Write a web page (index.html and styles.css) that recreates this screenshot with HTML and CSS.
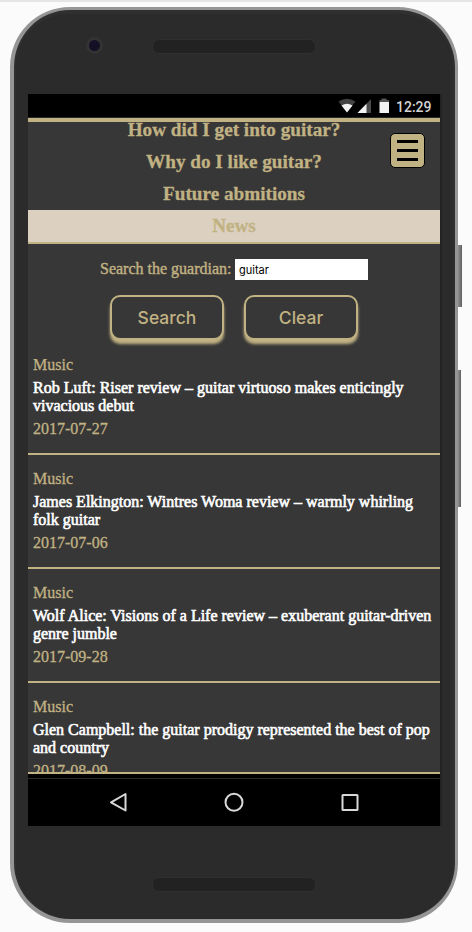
FILE: index.html
```html
<!DOCTYPE html>
<html lang="en">
<head>
<meta charset="utf-8">
<title>Guitar news</title>
<link rel="stylesheet" href="styles.css">
</head>
<body>
<div class="phone">
  <span class="camera"></span>
  <span class="speaker speaker-top"></span>
  <span class="speaker speaker-bottom"></span>
  <main class="screen">
    <div class="status">
      <svg width="104" height="23" viewBox="0 0 104 23">
        <path d="M1.500 7.500Q10 2 18.500 7.500L10 18.500Z" fill="#424242"/>
        <path d="M4.500 11.500Q10 8 15.500 11.500L10 18.500Z" fill="#f2f2f2"/>
        <path d="M34 5V19H20.500Z" fill="#4b4b4b"/>
        <path d="M29.500 9.700V19H20.500Z" fill="#f2f2f2"/>
        <path d="M42.500 6h2V4.500h5V6h2.500v2h-9.500z" fill="#555"/>
        <path d="M42.500 8h9.500v11h-9.500z" fill="#f2f2f2"/>
      </svg>
      <span class="time">12:29</span>
    </div>
    <header class="header">
      <nav class="nav">
        <a>How did I get into guitar?</a>
        <a>Why do I like guitar?</a>
        <a>Future abmitions</a>
        <a class="active">News</a>
      </nav>
      <button class="menu" aria-label="Menu"><i></i><i></i><i></i></button>
    </header>
    <form class="search">
      <label class="field"><span class="label">Search the guardian:</span><input type="text" value="guitar"></label>
      <div class="actions"><button class="btn" type="button">Search</button><button class="btn" type="button">Clear</button></div>
    </form>
    <section class="list">
      <article class="item"><p>Music</p><h2>Rob Luft: Riser review – guitar virtuoso makes enticingly<br>vivacious debut</h2><p>2017-07-27</p></article>
      <article class="item"><p>Music</p><h2>James Elkington: Wintres Woma review – warmly whirling<br>folk guitar</h2><p>2017-07-06</p></article>
      <article class="item"><p>Music</p><h2>Wolf Alice: Visions of a Life review – exuberant guitar-driven<br>genre jumble</h2><p>2017-09-28</p></article>
      <article class="item"><p>Music</p><h2>Glen Campbell: the guitar prodigy represented the best of pop<br>and country</h2><p>2017-08-09</p></article>
    </section>
    <footer class="softkeys">
      <svg width="412" height="47" viewBox="0 0 412 47" fill="none" stroke="#d8d8d8" stroke-width="2" stroke-linejoin="round">
        <path d="M83 23.300L97.500 15V31.500Z"/>
        <circle cx="206" cy="23.300" r="8.500"/>
        <rect x="314.500" y="16" width="15" height="15" rx="0.500"/>
      </svg>
    </footer>
  </main>
</div>
<span class="side side-power"></span>
<span class="side side-volume"></span>
</body>
</html>
```
FILE: styles.css
```css
* { box-sizing: border-box; }
body {
  margin: 0;
  width: 472px;
  height: 932px;
  padding: 5px 0 0 10px;
  overflow: hidden;
  position: relative;
  background: #fbfbfb;
  border-top: 2px solid #e5e5e5;
  font-family: "Liberation Serif", serif;
  color: #c1b283;
}
.phone {
  position: relative;
  width: 448px;
  height: 916px;
  padding: 84px 14px;
  border: 4px solid #959595;
  border-right-width: 3px;
  border-top-width: 3px;
  border-radius: 60px;
  background: #2b2b2b;
  box-shadow: inset 0 4px 1px #303030, inset -2px 0 1px #303030, inset 2px 0 1px #303030;
}
.camera {
  position: absolute;
  left: 72px;
  top: 27px;
  width: 17px;
  height: 17px;
  border: 3px solid #333;
  border-radius: 50%;
  background: #151026;
}
.speaker {
  position: absolute;
  left: 138px;
  width: 164px;
  height: 15px;
  border: 1px solid #2f2f2f;
  border-radius: 7px;
  background: #222;
}
.speaker-top { top: 29px; }
.speaker-bottom { top: 867px; }
.side {
  position: absolute;
  left: 458px;
  width: 4px;
  background: linear-gradient(to right, #909090, #5f5f5f);
}
.side-power { top: 243px; height: 62px; }
.side-volume { top: 368px; height: 137px; width: 3px; }
.screen {
  display: flex;
  flex-direction: column;
  width: 412px;
  height: 732px;
  background: #373737;
  box-shadow: 2px 0 0 #232323;
}
.status {
  flex: none;
  display: flex;
  height: 24px;
  padding-left: 309px;
  background: #000;
  border-bottom: 1px solid #292929;
}
.status svg { flex: none; width: 104px; margin-right: -45px; }
.time {
  font: 500 14px/26px Roboto, sans-serif;
  color: #d4d4d4;
}
.header {
  position: relative;
  flex: none;
  height: 126px;
  border-top: 4px solid #c1b283;
  border-bottom: 2px solid #c1b283;
}
.nav {
  display: flex;
  flex-direction: column;
  justify-content: flex-end;
  height: 120px;
  overflow: hidden;
}
.nav a {
  flex: none;
  height: 32px;
  text-align: center;
  font-size: 19.2px;
  line-height: 31px;
  font-weight: bold;
  -webkit-text-stroke: 0.3px #c1b283;
}
.nav .active { background: #dcd0c0; }
.menu {
  position: absolute;
  top: 11px;
  right: 15px;
  width: 35px;
  height: 35px;
  display: flex;
  flex-direction: column;
  justify-content: center;
  align-items: center;
  gap: 6px;
  padding: 0;
  border: 1px solid #000;
  border-radius: 5px;
  background: #c1b283;
}
.menu i { width: 21px; height: 3px; background: #000; }
.search { flex: none; height: 115px; padding-top: 15px; }
.field { display: flex; padding-left: 72px; font-size: 16px; line-height: 20px; }
.label { width: 135px; white-space: nowrap; -webkit-text-stroke: 0.4px #c1b283; }
.field input {
  width: 133px;
  height: 21px;
  padding: 1px 4px 0;
  border: 0;
  background: #fff;
  color: #000;
  font: 11px Inter, sans-serif;
}
.actions { display: flex; justify-content: center; gap: 20px; padding-top: 15px; }
.btn {
  width: 114px;
  height: 45px;
  padding: 0;
  border: 2px solid #c1b283;
  border-radius: 10px;
  background: #373737;
  color: #c1b283;
  font: 500 17.500px Inter, sans-serif;
  box-shadow: 0 4px 3px #c1b283;
}
.list {
  flex: none;
  height: 415px;
  display: flex;
  flex-direction: column;
  overflow: hidden;
  border-bottom: 2px solid #c1b283;
}
.item {
  flex: none;
  height: 114px;
  padding: 15px 5px 0;
  border-bottom: 2px solid #c1b283;
  font-size: 16px;
  line-height: 18px;
  white-space: nowrap;
}
.item:first-child { margin-top: -18px; }
.item p { margin: 0; -webkit-text-stroke: 0.3px; }
.item h2 {
  margin: 5px 0;
  font-size: 16px;
  font-weight: normal;
  color: #fff;
  -webkit-text-stroke: 0.6px #fff;
}
.softkeys {
  flex: none;
  height: 52px;
  padding-top: 4px;
  background: #000;
}
.softkeys svg { display: block; width: 412px; height: 48px; border-top: 1px solid #292929; }
```
